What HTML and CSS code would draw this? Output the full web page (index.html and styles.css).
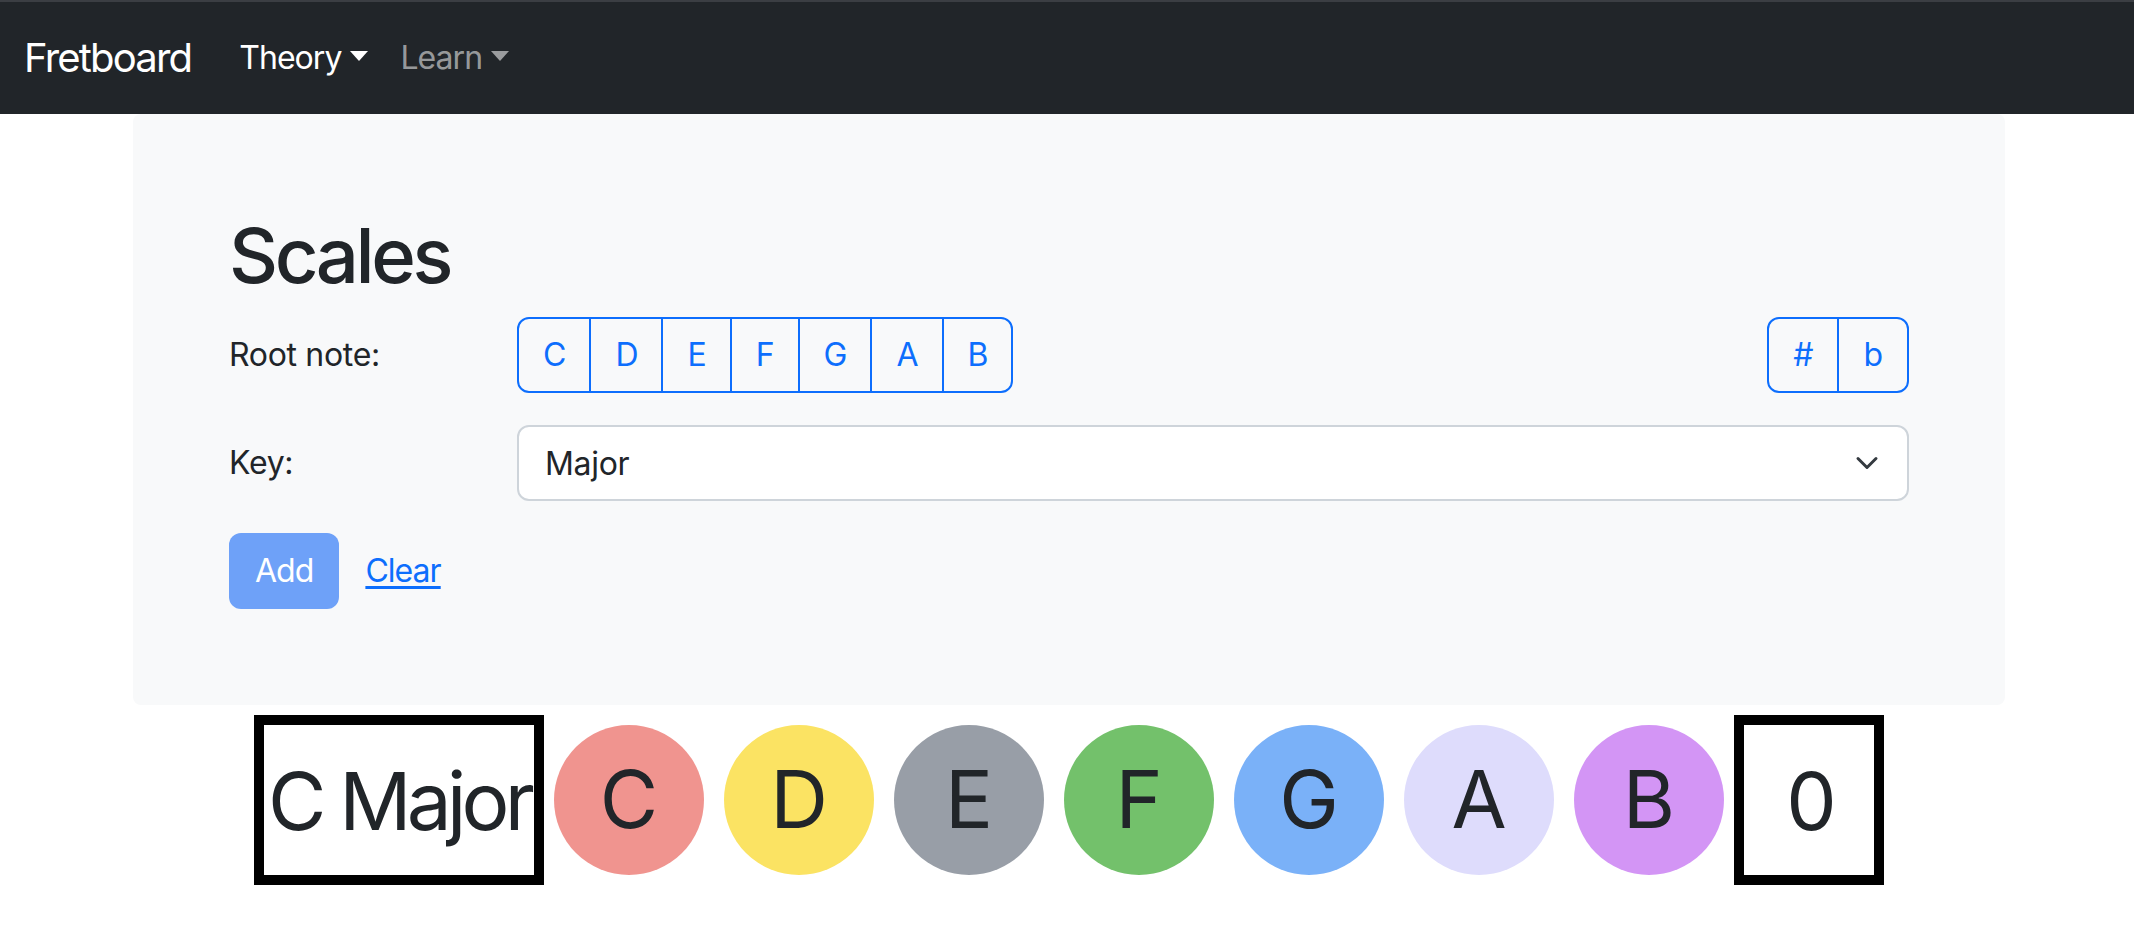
FILE: index.html
```html
<!DOCTYPE html>
<html lang="en">
<head>
<meta charset="utf-8">
<title>Fretboard</title>
<link rel="stylesheet" href="styles.css">
</head>
<body>
<nav class="navbar">
  <a class="brand" href="#">Fretboard</a>
  <ul class="nav">
    <li><a class="nav-link active dropdown-toggle" href="#">Theory</a></li>
    <li><a class="nav-link dropdown-toggle" href="#">Learn</a></li>
  </ul>
</nav>

<main class="page">
  <section class="panel">
    <h1 class="title">Scales</h1>

    <div class="form-row">
      <label class="form-label">Root note:</label>
      <div class="form-field split">
        <div class="btn-group btn-group-notes">
          <button class="btn">C</button>
          <button class="btn">D</button>
          <button class="btn">E</button>
          <button class="btn">F</button>
          <button class="btn">G</button>
          <button class="btn">A</button>
          <button class="btn">B</button>
        </div>
        <div class="btn-group">
          <button class="btn">#</button>
          <button class="btn">b</button>
        </div>
      </div>
    </div>

    <div class="form-row">
      <label class="form-label">Key:</label>
      <div class="form-field">
        <div class="select">
          <span>Major</span>
          <svg class="chevron" viewBox="0 0 16 16" width="32" height="24" aria-hidden="true"><path d="m2 5 6 6 6-6" fill="none" stroke="#343a40" stroke-linecap="round" stroke-linejoin="round" stroke-width="2"/></svg>
        </div>
      </div>
    </div>

    <div class="actions">
      <button class="btn-primary" disabled>Add</button>
      <a class="btn-link" href="#">Clear</a>
    </div>
  </section>

  <div class="notes">
    <div class="note-label">C Major</div>
    <div class="note note-c">C</div>
    <div class="note note-d">D</div>
    <div class="note note-e">E</div>
    <div class="note note-f">F</div>
    <div class="note note-g">G</div>
    <div class="note note-a">A</div>
    <div class="note note-b">B</div>
    <div class="note-label note-count">0</div>
  </div>
</main>
</body>
</html>
```

FILE: styles.css
```css
* {
  box-sizing: border-box;
}

body {
  margin: 0;
  font-family: Inter, "Liberation Sans", sans-serif;
  color: #212529;
  background: #fff;
  letter-spacing: -0.02em;
}

/* Navbar */
.navbar {
  height: 114px;
  background: #212529;
  border-top: 2px solid #3b3e43;
  display: flex;
  align-items: center;
  padding: 0 24px;
}

.brand {
  font-size: 40px;
  line-height: 60px;
  color: #fff;
  text-decoration: none;
  margin-right: 32px;
  letter-spacing: -0.045em;
}

.nav {
  display: flex;
  list-style: none;
  margin: 0;
  padding: 0;
}

.nav-link {
  display: block;
  font-size: 32px;
  line-height: 48px;
  padding: 0 16px;
  color: rgba(255, 255, 255, 0.55);
  text-decoration: none;
  letter-spacing: -0.03em;
}

.nav-link.active {
  color: #fff;
}

.dropdown-toggle::after {
  content: "";
  display: inline-block;
  margin-left: 9px;
  vertical-align: 8px;
  border-top: 10px solid;
  border-left: 9px solid transparent;
  border-right: 9px solid transparent;
}

/* Page */
.page {
  padding-left: 4px;
}

.panel {
  width: 1872px;
  margin: 0 auto;
  background: #f8f9fa;
  border-radius: 8px;
  padding: 96px;
}

.title {
  margin: 0 0 16px;
  font-size: 76px;
  font-weight: 500;
  line-height: 91px;
  letter-spacing: -0.045em;
}

.form-row {
  display: grid;
  grid-template-columns: 288px 1fr;
  margin-bottom: 32px;
}

.form-label {
  font-size: 32px;
  line-height: 48px;
  padding-top: 14px;
}

.split {
  display: flex;
  justify-content: space-between;
}

.btn-group {
  display: flex;
}

.btn {
  font-family: inherit;
  font-size: 32px;
  line-height: 48px;
  padding: 12px 24px;
  border: 2px solid #0d6efd;
  background: transparent;
  color: #0d6efd;
  border-radius: 0;
  margin-left: -2px;
  letter-spacing: 0;
}

.btn-group-notes .btn {
  padding-right: 23px;
}

.btn:first-child {
  margin-left: 0;
  border-radius: 12px 0 0 12px;
}

.btn:last-child {
  border-radius: 0 12px 12px 0;
}

.select {
  display: flex;
  align-items: center;
  justify-content: space-between;
  height: 76px;
  padding: 0 24px 0 26px;
  background: #fff;
  border: 2px solid #ced4da;
  border-radius: 12px;
  font-size: 32px;
}

.actions {
  display: flex;
  align-items: center;
}

.btn-primary {
  font-family: inherit;
  font-size: 32px;
  line-height: 48px;
  padding: 12px 24px;
  border: 2px solid transparent;
  border-radius: 12px;
  background: #6ea1f8;
  color: #fff;
  letter-spacing: -0.03em;
}

.btn-link {
  font-size: 32px;
  line-height: 48px;
  padding: 12px 24px;
  border: 2px solid transparent;
  color: #0d6efd;
  text-decoration: underline;
  text-underline-offset: 4px;
  letter-spacing: -0.03em;
}

/* Notes row */
.notes {
  display: flex;
  justify-content: center;
  align-items: center;
  margin-top: 10px;
}

.note-label {
  height: 170px;
  min-width: 150px;
  border: 10px solid #000;
  display: flex;
  align-items: center;
  justify-content: center;
  font-size: 80px;
  padding: 0 4px;
  letter-spacing: -0.06em;
}

.note {
  width: 150px;
  height: 150px;
  margin: 10px;
  border-radius: 50%;
  display: flex;
  align-items: center;
  justify-content: center;
  font-size: 80px;
  letter-spacing: 0;
  padding-bottom: 4px;
}

.note-c { background: #f0948f; }
.note-d { background: #fbe363; }
.note-e { background: #989ea7; }
.note-f { background: #73c16b; }
.note-g { background: #7ab1f8; }
.note-a { background: #dedcfc; }
.note-b { background: #d395f5; }
```
